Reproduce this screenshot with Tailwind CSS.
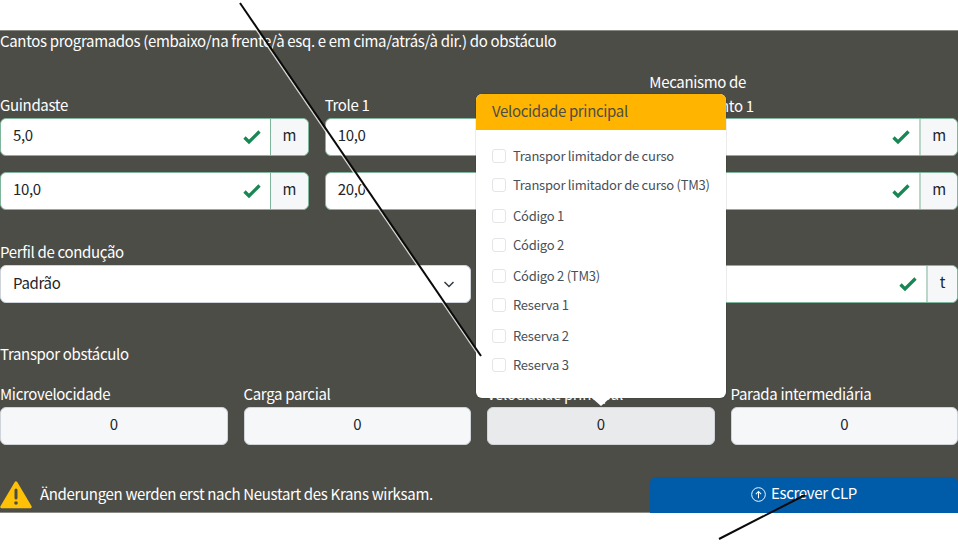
<!DOCTYPE html>
<html lang="pt"><head><meta charset="utf-8"><script src="https://cdn.jsdelivr.net/npm/@tailwindcss/browser@4"></script></head>
<body class="bg-white">
<div class="relative w-[958px] h-[544px] overflow-hidden bg-white font-['Noto_Sans_CJK_SC','Noto_Sans',sans-serif] text-[15px] tracking-[-0.33px] leading-[22px] text-[#212529]">
  <div class="mt-[30px] h-[483px] w-[958px] bg-[#4d4d47] text-white border-t border-b border-[#8a8a85]">
    <div class="h-6 -mt-px">Cantos programados (embaixo/na frente/à esq. e em cima/atrás/à dir.) do obstáculo</div>
    <div class="mt-4 grid grid-cols-3 gap-x-4 gap-y-4">
      <div class="flex flex-col justify-end"><div class="h-6">Guindaste</div>
        <div class="flex h-[38px] rounded-md border border-[#7fb59b] bg-white text-[#212529]"><div class="flex-1 flex items-center justify-between pl-3 pr-[9px] pb-1"><span>5,0</span><svg class="w-[18px] h-[18px] mt-1" viewBox="0 0 18 18"><path d="M1.500 9.500L6 14 16.500 3.500" fill="none" stroke="#198754" stroke-width="3.300"/></svg></div><div class="w-[38px] flex items-center justify-center border-l border-[#7fb59b] bg-[#f6f7f9] rounded-r-md pb-1">m</div></div></div>
      <div class="flex flex-col justify-end"><div class="h-6">Trole 1</div>
        <div class="flex h-[38px] rounded-md border border-[#7fb59b] bg-white text-[#212529]"><div class="flex-1 flex items-center justify-between pl-3 pr-[9px] pb-1"><span>10,0</span><svg class="w-[18px] h-[18px] mt-1" viewBox="0 0 18 18"><path d="M1.500 9.500L6 14 16.500 3.500" fill="none" stroke="#198754" stroke-width="3.300"/></svg></div><div class="w-[38px] flex items-center justify-center border-l border-[#7fb59b] bg-[#f6f7f9] rounded-r-md pb-1">m</div></div></div>
      <div class="flex flex-col justify-end"><div class="h-12 leading-6">Mecanismo de<br>levantamento 1</div>
        <div class="flex h-[38px] rounded-md border border-[#7fb59b] bg-white text-[#212529]"><div class="flex-1 flex items-center justify-between pl-3 pr-[9px] pb-1"><span>5,0</span><svg class="w-[18px] h-[18px] mt-1" viewBox="0 0 18 18"><path d="M1.500 9.500L6 14 16.500 3.500" fill="none" stroke="#198754" stroke-width="3.300"/></svg></div><div class="w-[38px] flex items-center justify-center border-l-2 border-[#b9d6c8] bg-[#f6f7f9] rounded-r-md pb-1">m</div></div></div>
      <div class="flex h-[38px] rounded-md border border-[#7fb59b] bg-white text-[#212529]"><div class="flex-1 flex items-center justify-between pl-3 pr-[9px] pb-1"><span>10,0</span><svg class="w-[18px] h-[18px] mt-1" viewBox="0 0 18 18"><path d="M1.500 9.500L6 14 16.500 3.500" fill="none" stroke="#198754" stroke-width="3.300"/></svg></div><div class="w-[38px] flex items-center justify-center border-l border-[#7fb59b] bg-[#f6f7f9] rounded-r-md pb-1">m</div></div>
      <div class="flex h-[38px] rounded-md border border-[#7fb59b] bg-white text-[#212529]"><div class="flex-1 flex items-center justify-between pl-3 pr-[9px] pb-1"><span>20,0</span><svg class="w-[18px] h-[18px] mt-1" viewBox="0 0 18 18"><path d="M1.500 9.500L6 14 16.500 3.500" fill="none" stroke="#198754" stroke-width="3.300"/></svg></div><div class="w-[38px] flex items-center justify-center border-l border-[#7fb59b] bg-[#f6f7f9] rounded-r-md pb-1">m</div></div>
      <div class="flex h-[38px] rounded-md border border-[#7fb59b] bg-white text-[#212529]"><div class="flex-1 flex items-center justify-between pl-3 pr-[9px] pb-1"><span>10,0</span><svg class="w-[18px] h-[18px] mt-1" viewBox="0 0 18 18"><path d="M1.500 9.500L6 14 16.500 3.500" fill="none" stroke="#198754" stroke-width="3.300"/></svg></div><div class="w-[38px] flex items-center justify-center border-l-2 border-[#b9d6c8] bg-[#f6f7f9] rounded-r-md pb-1">m</div></div>
    </div>
    <div class="mt-[31px] grid grid-cols-2 gap-x-4">
      <div><div class="h-6">Perfil de condução</div>
        <div class="flex h-[38px] items-center justify-between rounded-md border border-[#ced4da] bg-white pl-3 pr-[15px] pb-0.5 text-[#212529]"><span>Padrão</span><svg class="w-3 h-3 mt-0.5" viewBox="0 0 12 12"><path d="M1.500 4l4.500 4.500L10.500 4" fill="none" stroke="#343a40" stroke-width="1.500"/></svg></div></div>
      <div class="flex flex-col justify-end"><div class="h-6">Peso</div>
        <div class="flex h-[38px] rounded-md border border-[#7fb59b] bg-white text-[#212529]"><div class="flex-1 flex items-center justify-between pl-3 pr-[9px] pb-1"><span>5,0</span><svg class="w-[18px] h-[18px] mt-1" viewBox="0 0 18 18"><path d="M1.500 9.500L6 14 16.500 3.500" fill="none" stroke="#198754" stroke-width="3.300"/></svg></div><div class="w-[31px] flex items-center justify-center border-l-2 border-[#b9d6c8] bg-[#f6f7f9] rounded-r-md pb-1">t</div></div></div>
    </div>
    <div class="mt-10 h-6">Transpor obstáculo</div>
    <div class="mt-4 grid grid-cols-4 gap-x-4 text-center">
      <div><div class="text-left h-6">Microvelocidade</div><div class="h-[38px] flex items-center justify-center rounded-md border border-[#ced4da] bg-[#f6f7f9] pb-1 text-[#212529]">0</div></div>
      <div><div class="text-left h-6">Carga parcial</div><div class="h-[38px] flex items-center justify-center rounded-md border border-[#ced4da] bg-[#f6f7f9] pb-1 text-[#212529]">0</div></div>
      <div><div class="text-left h-6">Velocidade principal</div><div class="h-[38px] flex items-center justify-center rounded-md border border-[#ced4da] bg-[#e9eaec] pb-1 text-[#212529]">0</div></div>
      <div><div class="text-left h-6">Parada intermediária</div><div class="h-[38px] flex items-center justify-center rounded-md border border-[#ced4da] bg-[#f6f7f9] pb-1 text-[#212529]">0</div></div>
    </div>
    <div class="mt-8 flex h-9 items-center justify-between">
      <div class="flex items-center gap-2"><svg class="w-8 h-[29px] -mt-px" viewBox="0 0 32 29"><path d="M16 2.500L30.500 27H1.500Z" fill="#ffc107" stroke="#ffc107" stroke-width="2.500" stroke-linejoin="round"/><path d="M16 10v8" stroke="#4d4d47" stroke-width="3" stroke-linecap="round"/><circle cx="16" cy="23" r="1.800" fill="#4d4d47"/></svg><span class="pb-0.5">Änderungen werden erst nach Neustart des Krans wirksam.</span></div>
      <div class="w-[308px] h-9 flex items-center justify-center gap-[5px] rounded-t-md bg-[#005ca9] pb-1"><svg class="w-[15px] h-[15px] mt-0.5" viewBox="0 0 16 16" fill="none" stroke="#fff"><circle cx="8" cy="8" r="7.300"/><path d="M8 12V4.800M5.200 7.500L8 4.700l2.800 2.800" stroke-width="1.100"/></svg><span>Escrever CLP</span></div>
    </div>
  </div>

  <div class="absolute left-[476px] top-[94px] w-[250px] h-[304px] rounded-md bg-white text-[#495057] shadow-[0_0_0_1px_rgba(0,0,0,0.08)]">
    <div class="h-9 flex items-center px-4 pb-0.5 rounded-t-md bg-[#ffb500] text-[#4d4d47]">Velocidade principal</div>
    <div class="pt-[11px] text-[13px] tracking-[-0.24px] leading-[22px] flex flex-col">
      <label class="flex items-center h-[30px] pl-4 gap-[7px]"><span class="w-[14px] h-[14px] rounded-[3px] border border-[#e3e5e8] bg-white"></span>Transpor limitador de curso</label>
      <label class="flex items-center h-[30px] pl-4 pb-0.5 gap-[7px]"><span class="w-[14px] h-[14px] rounded-[3px] border border-[#e3e5e8] bg-white"></span>Transpor limitador de curso (TM3)</label>
      <label class="flex items-center h-[30px] pl-4 gap-[7px]"><span class="w-[14px] h-[14px] rounded-[3px] border border-[#e3e5e8] bg-white"></span>Código 1</label>
      <label class="flex items-center h-[30px] pl-4 pb-0.5 gap-[7px]"><span class="w-[14px] h-[14px] rounded-[3px] border border-[#e3e5e8] bg-white"></span>Código 2</label>
      <label class="flex items-center h-[30px] pl-4 gap-[7px]"><span class="w-[14px] h-[14px] rounded-[3px] border border-[#e3e5e8] bg-white"></span>Código 2 (TM3)</label>
      <label class="flex items-center h-[30px] pl-4 pb-0.5 gap-[7px]"><span class="w-[14px] h-[14px] rounded-[3px] border border-[#e3e5e8] bg-white"></span>Reserva 1</label>
      <label class="flex items-center h-[30px] pl-4 gap-[7px]"><span class="w-[14px] h-[14px] rounded-[3px] border border-[#e3e5e8] bg-white"></span>Reserva 2</label>
      <label class="flex items-center h-[30px] pl-4 pb-0.5 gap-[7px]"><span class="w-[14px] h-[14px] rounded-[3px] border border-[#e3e5e8] bg-white"></span>Reserva 3</label>
    </div>
    <div class="absolute left-[116px] -bottom-[8px] w-0 h-0 border-x-[9px] border-x-transparent border-t-[8px] border-t-white"></div>
  </div>

  <svg class="absolute inset-0 pointer-events-none" width="958" height="544" viewBox="0 0 958 544">
    <path d="M240 3L481 356" stroke="#fff" stroke-opacity=".75" stroke-width="1.500" fill="none" transform="translate(-1.300 .9)"/>
    <path d="M240 3L481 356" stroke="#0a0a0a" stroke-width="2" fill="none"/>
    <path d="M719 539L805 495" stroke="#0a0a0a" stroke-width="2" fill="none"/>
  </svg>
</div>
</body></html>
